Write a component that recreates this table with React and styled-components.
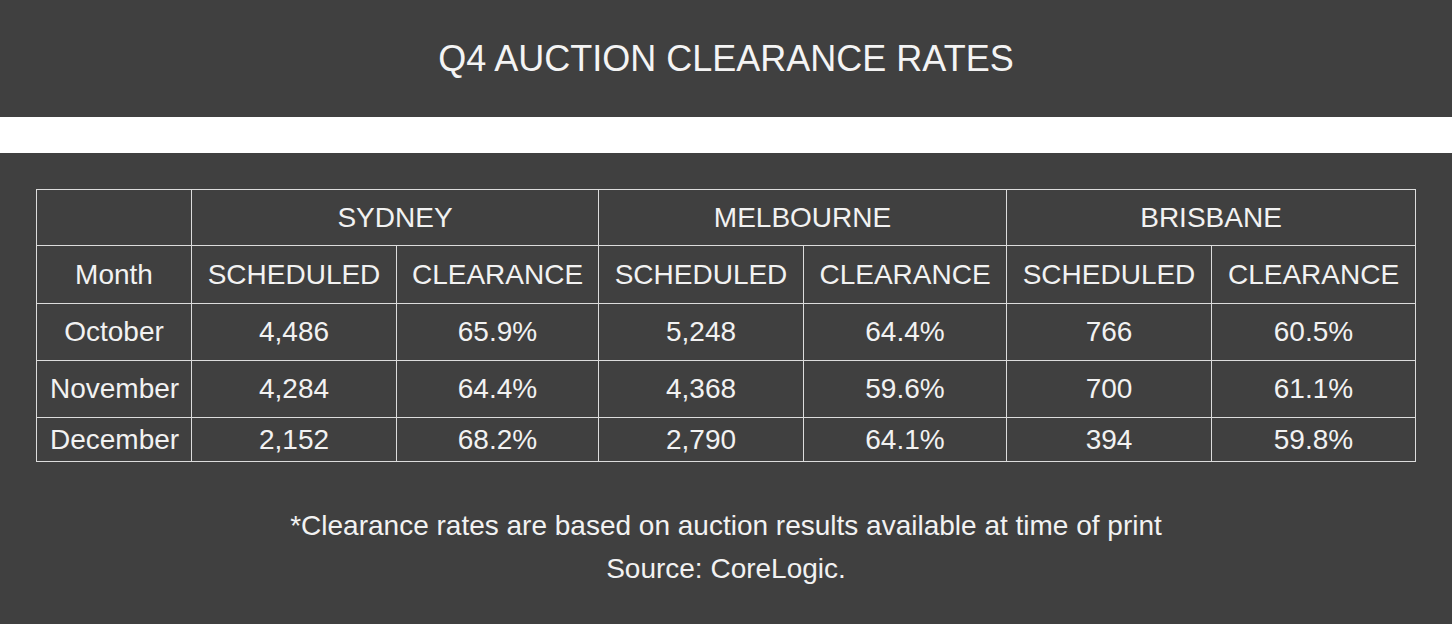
import React from "react";
import styled, { createGlobalStyle } from "styled-components";

const Global = createGlobalStyle`
  html, body { margin: 0; padding: 0; background: #ffffff; }
  body { font-family: "Liberation Sans", Arial, Helvetica, sans-serif; }
`;

const Page = styled.div`
  width: 1452px;
  display: flex;
  flex-direction: column;
  gap: 36px;
`;

const Banner = styled.header`
  height: 117px;
  background: #404040;
  display: flex;
  align-items: center;
  justify-content: center;
`;

const Title = styled.h1`
  margin: 0;
  font-size: 36px;
  font-weight: 400;
  color: #f4f4f4;
  letter-spacing: 0;
`;

const Panel = styled.section`
  background: #404040;
  padding: 36px 36px 34px 36px;
  display: flex;
  flex-direction: column;
  align-items: center;
  gap: 42px;
`;

const Table = styled.table`
  border-collapse: collapse;
  table-layout: fixed;
  width: 1379px;
  color: #f2f2f2;
  font-size: 28px;
`;

const Row = styled.tr`
  height: ${(p) => p.$h}px;
`;

const Cell = styled.td`
  border: 1px solid #dcdcdc;
  text-align: center;
  vertical-align: middle;
  padding: 0 13px;
  white-space: nowrap;
  font-weight: 400;
`;

const Notes = styled.div`
  display: flex;
  flex-direction: column;
  align-items: center;
  color: #f2f2f2;
  font-size: 28px;
  line-height: 43px;
`;

const Note = styled.p`
  margin: 0;
`;

const cities = ["SYDNEY", "MELBOURNE", "BRISBANE"];
const widths = [155, 205, 202, 205, 203, 205, 204];
const rows = [
  { m: "October", v: ["4,486", "65.9%", "5,248", "64.4%", "766", "60.5%"], h: 57 },
  { m: "November", v: ["4,284", "64.4%", "4,368", "59.6%", "700", "61.1%"], h: 57 },
  { m: "December", v: ["2,152", "68.2%", "2,790", "64.1%", "394", "59.8%"], h: 44 },
];

export default function App() {
  return (
    <>
      <Global />
      <Page>
        <Banner>
          <Title>Q4 AUCTION CLEARANCE RATES</Title>
        </Banner>
        <Panel>
          <Table>
            <colgroup>
              {widths.map((w, i) => (
                <col key={i} style={{ width: w }} />
              ))}
            </colgroup>
            <tbody>
              <Row $h={56}>
                <Cell />
                {cities.map((c) => (
                  <Cell key={c} colSpan={2}>{c}</Cell>
                ))}
              </Row>
              <Row $h={58}>
                <Cell>Month</Cell>
                {cities.map((c) => (
                  <React.Fragment key={c}>
                    <Cell>SCHEDULED</Cell>
                    <Cell>CLEARANCE</Cell>
                  </React.Fragment>
                ))}
              </Row>
              {rows.map((r) => (
                <Row key={r.m} $h={r.h}>
                  <Cell>{r.m}</Cell>
                  {r.v.map((v, i) => (
                    <Cell key={i}>{v}</Cell>
                  ))}
                </Row>
              ))}
            </tbody>
          </Table>
          <Notes>
            <Note>*Clearance rates are based on auction results available at time of print</Note>
            <Note>Source: CoreLogic.</Note>
          </Notes>
        </Panel>
      </Page>
    </>
  );
}
